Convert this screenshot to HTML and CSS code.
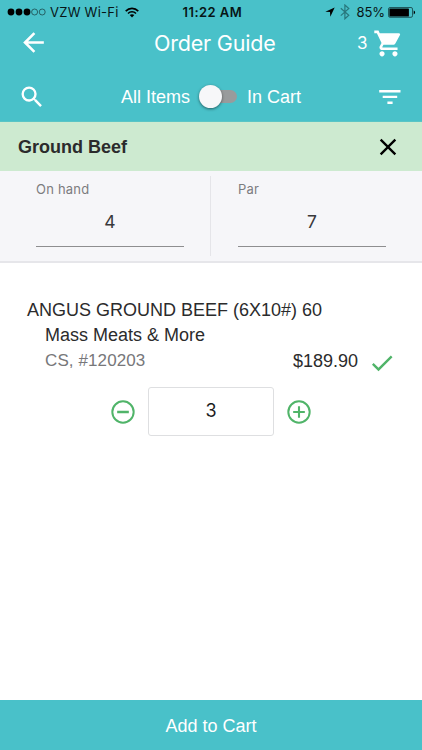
FILE: index.html
```html
<!DOCTYPE html>
<html lang="en">
<head>
<meta charset="utf-8">
<title>Order Guide</title>
<link rel="stylesheet" href="styles.css">
</head>
<body>
<header class="header">
  <div class="status">
    <svg class="signal" width="40" height="10" viewBox="0 0 40 10"><circle cx="4" cy="5" r="3.4"/><circle cx="12" cy="5" r="3.4"/><circle cx="20" cy="5" r="3.4"/><g fill="none" stroke="#17393c" stroke-width=".7"><circle cx="27.6" cy="5" r="3"/><circle cx="35.2" cy="5" r="3"/></g></svg>
    <span class="carrier">VZW Wi-Fi</span>
    <svg class="wifi" width="14" height="11" viewBox="0 0 14 11"><g fill="none" stroke="#000" stroke-width="1.6"><path d="M.7 4.1C4.3.4 9.7.4 13.3 4.1"/><path d="M3 6.500c2.300-2.300 5.700-2.300 8 0"/></g><path d="M4.700 8.100c1.300-1.200 3.300-1.200 4.600 0L7 10.500z"/></svg>
    <span class="time">11:22 AM</span>
    <svg class="location" width="10" height="10" viewBox="0 0 10 10"><path d="M9.700.4 5.300 9.700 5 5.100.3 4.800z"/></svg>
    <svg class="bluetooth" width="10" height="16" viewBox="0 0 10 16"><path d="M.8 4.300 8.800 11.300 4.900 14.800V1L8.800 4.500.8 11.600" fill="none" stroke="#28777c" stroke-width="1.200"/></svg>
    <span class="percent">85%</span>
    <svg class="battery" width="28" height="11" viewBox="0 0 28 11"><rect x=".5" y=".5" width="24" height="9.800" rx="1.500" fill="none" stroke="#143f42" stroke-width=".8"/><rect x="1.400" y="1.400" width="19.500" height="8" rx=".5"/><path d="M25.700 3.500c1.900.6 1.900 3.300 0 3.900z"/></svg>
  </div>
  <div class="titlebar">
    <svg class="back" width="31" height="31" viewBox="0 0 24 24"><path d="M20 11H7.830l5.590-5.590L12 4l-8 8 8 8 1.410-1.410L7.830 13H20v-2z"/></svg>
    <h1 class="title">Order Guide</h1>
    <span class="count">3</span>
    <svg class="cart" width="31" height="31" viewBox="0 0 24 24"><path d="M7 18c-1.100 0-1.990.9-1.990 2S5.900 22 7 22s2-.9 2-2-.9-2-2-2zM1 2v2h2l3.600 7.590-1.350 2.450c-.16.28-.25.61-.25.960 0 1.100.9 2 2 2h12v-2H7.420c-.14 0-.25-.11-.25-.25l.03-.12.900-1.630h7.450c.75 0 1.410-.41 1.750-1.030l3.580-6.490A1 1 0 0 0 20 4H5.210l-.94-2H1zm16 16c-1.100 0-1.990.9-1.990 2s.89 2 1.990 2 2-.9 2-2-.9-2-2-2z"/></svg>
  </div>
  <div class="filters">
    <svg class="search" width="28" height="28" viewBox="0 0 24 24"><path d="M15.500 14h-.79l-.28-.27A6.470 6.470 0 0 0 16 9.500 6.500 6.500 0 1 0 9.500 16c1.610 0 3.090-.59 4.230-1.570l.27.280v.79l5 4.990L20.490 19l-4.990-5zm-6 0a4.500 4.500 0 1 1 0-9 4.500 4.500 0 0 1 0 9z"/></svg>
    <span class="all">All Items</span>
    <span class="toggle"><span class="thumb"></span></span>
    <span class="incart">In Cart</span>
    <svg class="filter" width="22" height="14" viewBox="0 0 22 14"><path d="M.2 0h21.300v2.400H.2zM3.700 5.800h14.500v2.300H3.700zM8.400 11.500h5.200v2.400H8.400z"/></svg>
  </div>
</header>
<section class="group">
  <h2 class="group-name">Ground Beef</h2>
  <svg width="28" height="28" viewBox="0 0 24 24"><path d="M19 6.410 17.590 5 12 10.590 6.410 5 5 6.410 10.590 12 5 17.590 6.410 19 12 13.410 17.590 19 19 17.590 13.410 12z"/></svg>
</section>
<section class="fields">
  <div class="field"><span class="label">On hand</span><span class="value">4</span></div>
  <div class="divider"></div>
  <div class="field"><span class="label">Par</span><span class="value">7</span></div>
</section>
<main class="product">
  <div class="name">ANGUS GROUND BEEF (6X10#) 60</div>
  <div class="vendor">Mass Meats &amp; More</div>
  <div class="details">
    <span class="sku">CS, #120203</span>
    <span class="price">$189.90</span>
    <svg class="check" width="28" height="28" viewBox="0 0 24 24"><path d="M9 16.170 4.830 12l-1.420 1.410L9 19 21 7l-1.410-1.410z"/></svg>
  </div>
  <div class="stepper">
    <svg width="28" height="28" viewBox="0 0 24 24"><path d="M7 11v2h10v-2H7zm5-9a10 10 0 1 0 0 20 10 10 0 0 0 0-20zm0 18.300a8.300 8.300 0 1 1 0-16.600 8.300 8.300 0 0 1 0 16.600z"/></svg>
    <span class="quantity">3</span>
    <svg width="28" height="28" viewBox="0 0 24 24"><path d="M12.900 7h-1.800v4.100H7v1.800h4.100V17h1.800v-4.100H17v-1.800h-4.100V7zM12 2a10 10 0 1 0 0 20 10 10 0 0 0 0-20zm0 18.300a8.300 8.300 0 1 1 0-16.600 8.300 8.300 0 0 1 0 16.600z"/></svg>
  </div>
</main>
<footer class="footer">Add to Cart</footer>
</body>
</html>
```
FILE: styles.css
```css
* { box-sizing: border-box; }
body {
  margin: 0;
  width: 422px;
  height: 750px;
  display: flex;
  flex-direction: column;
  overflow: hidden;
  background: #fff;
  color: #2b2b2c;
  font: 18px/24px "Liberation Sans", Arial, sans-serif;
  white-space: nowrap;
}
svg { display: block; flex: none; }
h1, h2 { margin: 0; font-weight: 400; }
span { flex: none; }
.header { height: 122px; background: #49c1c9; color: #fff; border-bottom: 1px solid #5ac5c5; }
.status {
  height: 24px;
  display: flex;
  align-items: center;
  padding-left: 7px;
  color: #071516;
  font: 13px/24px Inter, sans-serif;
}
.carrier { width: 72px; margin-left: 3px; letter-spacing: .25px; }
.wifi { margin-left: 3px; }
.time { width: 62px; margin-left: 43.500px; font-weight: 600; letter-spacing: .45px; }
.location { margin-left: 80px; }
.bluetooth { margin-left: 5px; }
.percent { width: 28px; margin-left: 7px; letter-spacing: -.1px; }
.battery { margin-left: 3px; }
.titlebar { height: 38px; display: flex; align-items: center; padding-left: 18px; fill: #fff; }
.back { margin-top: -1px; }
.title { width: 122px; margin-left: 105px; font: 21.500px/28px Inter, sans-serif; letter-spacing: -.2px; }
.count { width: 12px; margin-left: 81px; font: 17px/24px Inter, sans-serif; }
.cart { margin-left: 4px; }
.filters { height: 70px; display: flex; align-items: center; padding: 0 0 0 18px; fill: #fff; }
.all { width: 70px; margin-left: 75px; }
.toggle {
  width: 32px;
  height: 13px;
  margin: -2px 0 0 14px;
  display: flex;
  align-items: center;
  border-radius: 7px;
  background: #999b9c;
}
.thumb {
  width: 23px;
  height: 23px;
  margin-left: -6px;
  border-radius: 50%;
  background: #f7f7f9;
  box-shadow: 0 1px 3px rgba(0, 0, 0, .5);
}
.incart { width: 54px; margin-left: 10px; }
.filter { margin-left: 78px; }
.group {
  height: 49px;
  padding: 0 20px 0 18px;
  display: flex;
  align-items: center;
  justify-content: space-between;
  background: #cdead0;
}
.group-name { font-size: 18px; font-weight: 700; }
.fields {
  height: 92px;
  padding: 5px 36px 5px;
  display: flex;
  justify-content: space-between;
  background: #f6f6f9;
  border-bottom: 2px solid #e6e6ea;
}
.field {
  width: 148px;
  height: 71px;
  display: flex;
  flex-direction: column;
  border-bottom: 1px solid #8e8e90;
}
.label { color: #7c7c7f; font: 13px/26px Inter, sans-serif; letter-spacing: .2px; }
.value { text-align: center; font: 17.500px/40px Inter, sans-serif; color: #39393b; }
.divider { width: 1px; margin-left: -1px; background: #e5e5e9; }
.product { flex: 1; padding-top: 35px; }
.name { margin-left: 27px; line-height: 25px; }
.vendor { margin-left: 45px; line-height: 25px; }
.details { height: 25px; display: flex; align-items: center; padding-left: 45px; }
.sku { width: 103px; color: #77777a; font-size: 17px; letter-spacing: .1px; }
.price { width: 67px; margin-left: 145px; }
.check { margin: 5px 0 0 8px; fill: #50b469; }
.stepper { display: flex; align-items: center; justify-content: center; gap: 11px; margin-top: 14px; fill: #50b469; }
.quantity {
  width: 126px;
  height: 49px;
  border: 1px solid #dedfe1;
  border-radius: 3px;
  text-align: center;
  color: #1c1c1d;
  font: 18px/46px Inter, sans-serif;
}
.footer { height: 50px; background: #49c1c9; color: #fff; text-align: center; line-height: 52px; }
```
